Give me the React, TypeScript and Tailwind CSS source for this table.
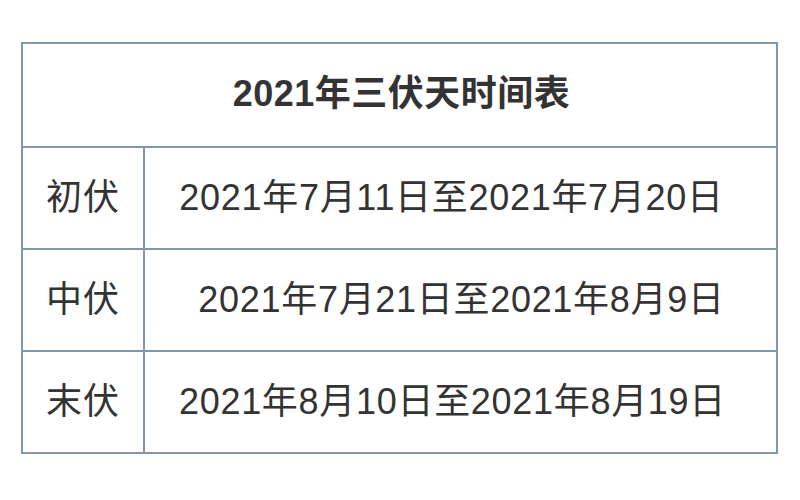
import React from 'react';

const rows = [
    { label: '初伏', range: '2021年7月11日至2021年7月20日', shift: 'pr-[18px]' },
    { label: '中伏', range: '2021年7月21日至2021年8月9日', shift: 'pl-[2px]' },
    { label: '末伏', range: '2021年8月10日至2021年8月19日', shift: 'pr-[16px]' },
];

export default function App() {
    return (
        <div
            className="w-[800px] h-[500px] bg-white pt-[42px] pl-[21px] text-[#333333]"
            style={{ fontFamily: '"Liberation Sans", "Noto Sans CJK SC", sans-serif' }}
        >
            <div className="w-[757px] border-2 border-[#8197ad]">
                {/* Title row */}
                <div className="h-[102px] flex items-center justify-center text-[36px] font-bold tracking-[0.5px] pb-[2px] pl-[4px]">
                    2021年三伏天时间表
                </div>

                {rows.map((row) => (
                    <div
                        key={row.label}
                        className="grid grid-cols-[122px_1fr] h-[102px] border-t-2 border-[#8197ad]"
                    >
                        <div className="flex items-center justify-center border-r-2 border-[#8197ad] text-[36px] tracking-[1px]">
                            {row.label}
                        </div>
                        <div className={`flex items-center justify-center text-[36px] tracking-[0.7px] ${row.shift}`}>
                            {row.range}
                        </div>
                    </div>
                ))}
            </div>
        </div>
    );
}
